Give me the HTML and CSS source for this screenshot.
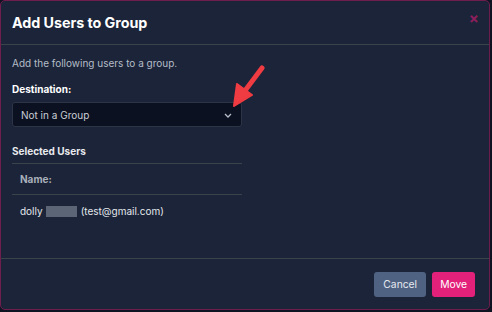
FILE: index.html
```html
<!DOCTYPE html>
<html>
<head>
<meta charset="utf-8">
<link rel="stylesheet" href="styles.css">
</head>
<body>
<div class="modal">
  <div class="modal-header">
    <h1 class="title">Add Users to Group</h1>
    <span class="close">&times;</span>
  </div>
  <div class="modal-body">
    <p class="intro">Add the following users to a group.</p>
    <label class="label">Destination:</label>
    <div class="select">
      <span>Not in a Group</span>
      <svg class="chev" width="8" height="5" viewBox="0 0 8 5"><path d="M1 1 L4 4 L7 1" fill="none" stroke="#b8bfca" stroke-width="1.3"/></svg>
    </div>
    <div class="section-title">Selected Users</div>
    <div class="table">
      <div class="th">Name:</div>
      <div class="td">dolly <span class="redact"></span> (test@gmail.com)</div>
    </div>
  </div>
  <div class="modal-footer">
    <button class="btn cancel">Cancel</button>
    <button class="btn move">Move</button>
  </div>
  <svg class="arrow" width="40" height="50" viewBox="0 0 40 50">
    <path d="M32 6 L14 30" stroke="#ef3b42" stroke-width="5" stroke-linecap="round" fill="none"/>
    <path d="M4 44 L7 22 L22 33 Z" fill="#ef3b42" stroke="#ef3b42" stroke-width="2" stroke-linejoin="round"/>
  </svg>
</div>
</body>
</html>
```
FILE: styles.css
```css
* { box-sizing: border-box; }
html, body { margin: 0; padding: 0; background: #0f1422; }
body { width: 492px; height: 312px; font-family: Inter, "Noto Sans", sans-serif; }
.modal {
  position: relative;
  width: 490px;
  height: 310px;
  background: #1b2438;
  border: 1px solid #6e1d4c;
  border-radius: 5px;
  display: flex;
  flex-direction: column;
  color: #fff;
}
.modal-header {
  height: 44px;
  flex: none;
  border-bottom: 1px solid #38444a;
  display: flex;
  align-items: center;
  justify-content: space-between;
  padding: 0 11px;
}
.title { margin: 0; font-size: 14.3px; font-weight: 700; letter-spacing: -0.05px; }
.close { color: #8a1f5c; font-size: 15px; font-weight: 700; margin-top: -9px; margin-right: -1px; }
.modal-body { flex: 1; padding: 12px 11px 0; font-size: 10px; line-height: 12px; }
.intro { margin: 0; color: #b5bcc8; }
.label { display: block; margin-top: 14px; font-weight: 700; color: #fff; }
.select {
  margin-top: 7px;
  width: 230px;
  height: 25px;
  background: #0b1120;
  border: 1px solid #2c3545;
  border-radius: 3px;
  display: flex;
  align-items: center;
  justify-content: space-between;
  padding: 0 9px 0 8px;
  color: #c9ced6;
}
.chev { margin-top: 1px; }
.section-title { margin-top: 18px; font-weight: 700; color: #e8eaee; }
.table { width: 230px; margin-top: 6px; border-top: 1px solid #38444a; }
.th { height: 31px; display: flex; align-items: center; padding-left: 8px; font-weight: 700; color: #a9b0bb; border-bottom: 1px solid #38444a; }
.td { height: 32px; display: flex; align-items: center; padding-left: 8px; color: #e4e7ec; }
.redact { display: inline-block; width: 31px; height: 11px; background: #5c6576; margin: 0 4px 0 3px; }
.modal-footer {
  height: 51px;
  flex: none;
  border-top: 1px solid #38444a;
  display: flex;
  align-items: center;
  justify-content: flex-end;
  gap: 6px;
  padding: 0 14px 0 0;
}
.btn { height: 25px; border: none; border-radius: 3px; font-family: Inter, "Noto Sans", sans-serif; font-size: 10.3px; color: #fff; padding: 0 9px; }
.cancel { background: #4f6282; color: #e6e9ef; }
.move { background: #e3217b; padding: 0 8px; }
.arrow { position: absolute; left: 229px; top: 61px; }
```
